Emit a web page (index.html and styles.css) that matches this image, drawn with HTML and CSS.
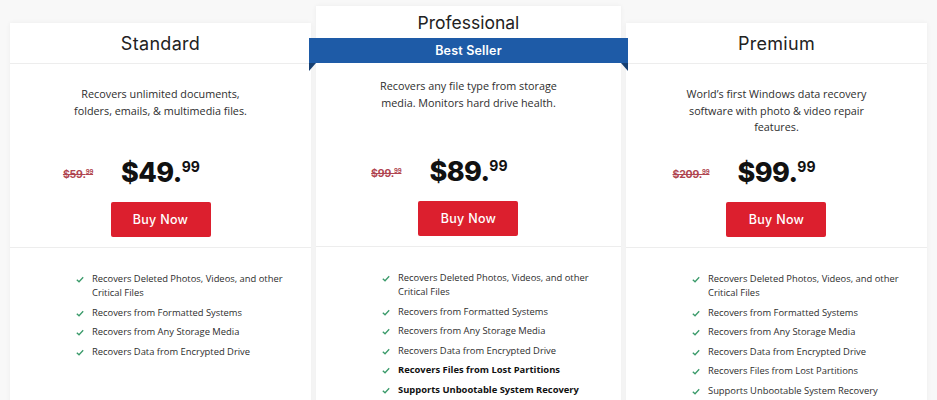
FILE: index.html
```html
<!DOCTYPE html>
<html>
<head>
<meta charset="utf-8">
<link rel="stylesheet" href="styles.css">
</head>
<body>
<div class="plans">
  <div class="card">
    <div class="head"><h2 class="title">Standard</h2></div>
    <div class="top">
      <p class="desc">Recovers unlimited documents,<br>folders, emails, &amp; multimedia files.</p>
      <div class="price"><span class="old">$59.<sup>99</sup></span><span class="new">$49.<sup>99</sup></span><span></span></div>
      <div class="btnrow"><a class="btn">Buy Now</a></div>
    </div>
    <ul class="features">
      <li><svg class="chk" viewBox="0 0 10 8"><polyline points="1,4.2 3.8,6.8 9,1.2"/></svg><span>Recovers Deleted Photos, Videos, and other Critical Files</span></li>
      <li><svg class="chk" viewBox="0 0 10 8"><polyline points="1,4.2 3.8,6.8 9,1.2"/></svg><span>Recovers from Formatted Systems</span></li>
      <li><svg class="chk" viewBox="0 0 10 8"><polyline points="1,4.2 3.8,6.8 9,1.2"/></svg><span>Recovers from Any Storage Media</span></li>
      <li><svg class="chk" viewBox="0 0 10 8"><polyline points="1,4.2 3.8,6.8 9,1.2"/></svg><span>Recovers Data from Encrypted Drive</span></li>
    </ul>
  </div>
  <div class="card pro">
    <div class="head"><h2 class="title">Professional</h2></div>
    <div class="ribbon">Best Seller</div>
    <div class="top">
      <p class="desc">Recovers any file type from storage<br>media. Monitors hard drive health.</p>
      <div class="price"><span class="old">$99.<sup>99</sup></span><span class="new">$89.<sup>99</sup></span><span></span></div>
      <div class="btnrow"><a class="btn">Buy Now</a></div>
    </div>
    <ul class="features">
      <li><svg class="chk" viewBox="0 0 10 8"><polyline points="1,4.2 3.8,6.8 9,1.2"/></svg><span>Recovers Deleted Photos, Videos, and other Critical Files</span></li>
      <li><svg class="chk" viewBox="0 0 10 8"><polyline points="1,4.2 3.8,6.8 9,1.2"/></svg><span>Recovers from Formatted Systems</span></li>
      <li><svg class="chk" viewBox="0 0 10 8"><polyline points="1,4.2 3.8,6.8 9,1.2"/></svg><span>Recovers from Any Storage Media</span></li>
      <li><svg class="chk" viewBox="0 0 10 8"><polyline points="1,4.2 3.8,6.8 9,1.2"/></svg><span>Recovers Data from Encrypted Drive</span></li>
      <li class="strong"><svg class="chk" viewBox="0 0 10 8"><polyline points="1,4.2 3.8,6.8 9,1.2"/></svg><span>Recovers Files from Lost Partitions</span></li>
      <li class="strong"><svg class="chk" viewBox="0 0 10 8"><polyline points="1,4.2 3.8,6.8 9,1.2"/></svg><span>Supports Unbootable System Recovery</span></li>
    </ul>
  </div>
  <div class="card">
    <div class="head"><h2 class="title">Premium</h2></div>
    <div class="top">
      <p class="desc">World’s first Windows data recovery<br>software with photo &amp; video repair<br>features.</p>
      <div class="price"><span class="old">$209.<sup>99</sup></span><span class="new">$99.<sup>99</sup></span><span></span></div>
      <div class="btnrow"><a class="btn">Buy Now</a></div>
    </div>
    <ul class="features">
      <li><svg class="chk" viewBox="0 0 10 8"><polyline points="1,4.2 3.8,6.8 9,1.2"/></svg><span>Recovers Deleted Photos, Videos, and other Critical Files</span></li>
      <li><svg class="chk" viewBox="0 0 10 8"><polyline points="1,4.2 3.8,6.8 9,1.2"/></svg><span>Recovers from Formatted Systems</span></li>
      <li><svg class="chk" viewBox="0 0 10 8"><polyline points="1,4.2 3.8,6.8 9,1.2"/></svg><span>Recovers from Any Storage Media</span></li>
      <li><svg class="chk" viewBox="0 0 10 8"><polyline points="1,4.2 3.8,6.8 9,1.2"/></svg><span>Recovers Data from Encrypted Drive</span></li>
      <li><svg class="chk" viewBox="0 0 10 8"><polyline points="1,4.2 3.8,6.8 9,1.2"/></svg><span>Recovers Files from Lost Partitions</span></li>
      <li><svg class="chk" viewBox="0 0 10 8"><polyline points="1,4.2 3.8,6.8 9,1.2"/></svg><span>Supports Unbootable System Recovery</span></li>
    </ul>
  </div>
</div>
</body>
</html>
```
FILE: styles.css
```css
* { box-sizing: border-box; }
html, body { margin: 0; padding: 0; }
body {
  background: #f8f8f8;
  font-family: "Open Sans", "Liberation Sans", sans-serif;
  color: #333;
  overflow: hidden;
  height: 400px;
}
.plans {
  display: flex;
  gap: 5px;
  padding: 0 10px;
  align-items: flex-start;
}
.card {
  width: 302px;
  margin-top: 23px;
  background: #fff;
  box-shadow: 0 0 5px rgba(0,0,0,0.05);
  height: 420px;
}
.card.pro { margin-top: 6px; width: 306px; }
.head {
  height: 41px;
  border-bottom: 1px solid #ededed;
  display: flex;
  align-items: center;
  justify-content: center;
}
.pro .head { height: 32px; border-bottom: 0; }
.title {
  margin: 0;
  font-family: "Inter", "Lato", sans-serif;
  font-weight: 400;
  font-size: 18px;
  letter-spacing: 0.3px;
  color: #222;
}
.pro .title { letter-spacing: 0; font-size: 17.5px; }
.ribbon {
  position: relative;
  margin: 0 -7px;
  height: 25px;
  background: #1e5ba7;
  color: #fff;
  font-family: "Inter", sans-serif;
  font-weight: 600;
  font-size: 12.5px;
  letter-spacing: 0.2px;
  display: flex;
  align-items: center;
  justify-content: center;
}
.ribbon::before, .ribbon::after {
  content: "";
  position: absolute;
  top: 25px;
  border-top: 8px solid #163f72;
}
.ribbon::before { left: 0; border-right: 7px solid transparent; }
.ribbon::after { right: 0; border-left: 7px solid transparent; }
.top {
  padding-top: 22px;
  border-bottom: 1px solid #ededed;
  padding-bottom: 10px;
}
.pro .top { padding-top: 15px; }
.desc {
  margin: 0;
  height: 66px;
  text-align: center;
  font-size: 10.8px;
  line-height: 16.5px;
  color: #2e2e2e;
}
.pro .desc { height: 73px; }
.price {
  display: grid;
  grid-template-columns: 1fr auto 1fr;
  align-items: center;
  height: 40px;
}
.old {
  justify-self: end;
  margin-right: 28px;
  margin-top: 4px;
  font-family: "Inter", sans-serif;
  font-weight: 700;
  font-size: 10.5px;
  color: #b04550;
  text-decoration: line-through;
  letter-spacing: -0.2px;
}
.old sup { font-size: 6px; vertical-align: 4px; }
.new {
  font-family: "Inter", sans-serif;
  font-weight: 800;
  font-size: 27px;
  color: #111;
  letter-spacing: -0.6px;
}
.new sup { font-size: 14px; vertical-align: 10px; font-weight: 700; letter-spacing: 0; }
.btnrow {
  display: flex;
  justify-content: center;
  margin-top: 10px;
}
.btn {
  width: 100px;
  height: 35px;
  background: #dc1f2e;
  border-radius: 2px;
  color: #fff;
  font-family: "Inter", sans-serif;
  font-weight: 500;
  font-size: 12.5px;
  display: flex;
  align-items: center;
  justify-content: center;
  letter-spacing: 0.3px;
}
.features {
  list-style: none;
  margin: 0;
  padding: 24px 0 0 64px;
  width: 290px;
}
.features li {
  display: flex;
  align-items: flex-start;
  font-size: 9.4px;
  line-height: 14px;
  color: #2e2e2e;
  margin-bottom: 5.5px;
}
.features li.strong { font-weight: 700; color: #111; }
.chk {
  width: 8px;
  height: 7px;
  flex: none;
  margin: 4px 8px 0 2px;
}
.chk polyline {
  fill: none;
  stroke: #3a9a6a;
  stroke-width: 1.6;
}
```
